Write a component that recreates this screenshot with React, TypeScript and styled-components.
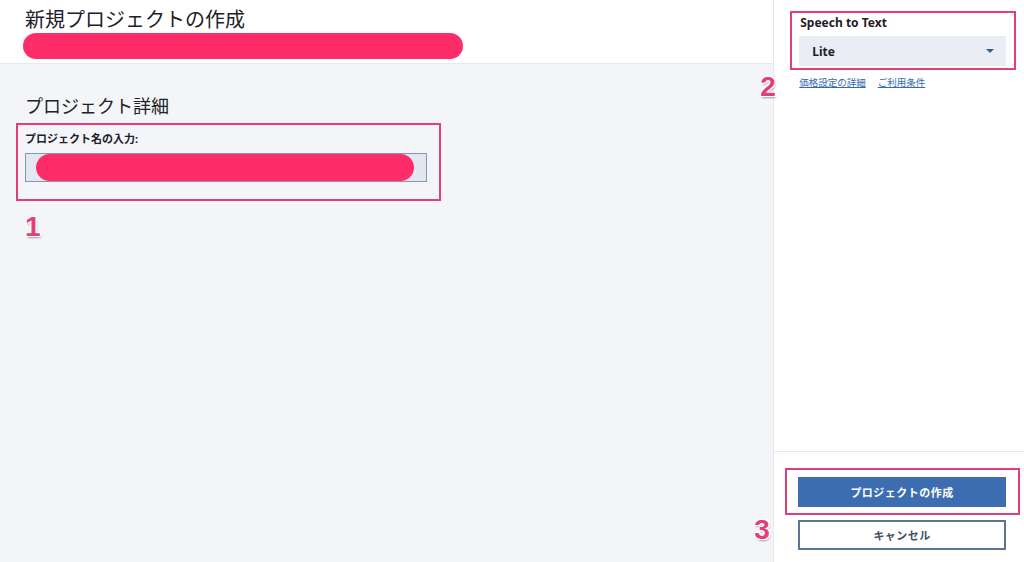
import React from 'react'
import styled, { createGlobalStyle } from 'styled-components'

const Global = createGlobalStyle`
    html, body {
        margin: 0;
        padding: 0;
        background: #ffffff;
    }
    body {
        font-family: "Noto Sans", "Noto Sans CJK JP", sans-serif;
        color: #1f2126;
    }
`

const Page = styled.div`
    display: flex;
    width: 1024px;
    height: 562px;
    overflow: hidden;
`
const Main = styled.div`
    width: 774px;
    display: flex;
    flex-direction: column;
    background: #f4f5f9;
`
const Header = styled.header`
    height: 64px;
    flex-shrink: 0;
    background: #ffffff;
    border-bottom: 1px solid #e8e9ee;
    padding: 7px 0 0 23px;
    box-sizing: border-box;
`
const Title = styled.h1`
    margin: 0 0 0 2px;
    font-size: 20px;
    line-height: 26px;
    font-weight: 400;
    color: #202227;
`
const Redacted = styled.div<{ $w: number; $h: number }>`
    width: ${({ $w }) => $w}px;
    height: ${({ $h }) => $h}px;
    border-radius: ${({ $h }) => $h / 2}px;
    background: #fe2c68;
`
const Content = styled.section`
    position: relative;
    padding: 30px 0 0 16px;
`
const SectionTitle = styled.h2`
    margin: 0 0 5px 9px;
    font-size: 18px;
    line-height: 24px;
    font-weight: 400;
    color: #202227;
`
const Highlight = styled.div`
    border: 2px solid #e23f78;
    box-sizing: border-box;
`
const NameBox = styled(Highlight)`
    width: 425px;
    padding: 6px 0 17px 7px;
`
const FieldLabel = styled.label`
    display: block;
    font-size: 11px;
    line-height: 16px;
    font-weight: 700;
    margin-bottom: 6px;
`
const TextInput = styled.div`
    width: 402px;
    height: 29px;
    box-sizing: border-box;
    background: #e2e7f0;
    border: 1px solid #8598b0;
    padding: 0 12px 0 10px;
    display: flex;
    align-items: center;
`
const Step = styled.span`
    position: absolute;
    font-family: "Liberation Sans", "Noto Sans", sans-serif;
    font-size: 28px;
    font-weight: 700;
    line-height: 1;
    color: #e0407a;
    text-shadow: 0 0 1px #fff, 1px 1px 0 #fff, -1px -1px 0 #fff, 1px -1px 0 #fff, -1px 1px 0 #fff, 1px 2px 2px rgba(0, 0, 0, 0.35);
`

const Sidebar = styled.aside`
    width: 250px;
    border-left: 1px solid #e6e7ec;
    background: #ffffff;
    display: flex;
    flex-direction: column;
    justify-content: space-between;
    position: relative;
`
const SideTop = styled.div`
    padding: 11px 8px 0 16px;
`
const PlanBox = styled(Highlight)`
    padding: 0 8px 2px 7px;
`
const PlanLabel = styled.div`
    font-size: 12px;
    line-height: 18px;
    font-weight: 700;
    margin: 1px 0 4px 1px;
`
const Select = styled.div`
    height: 30px;
    background: #eaedf3;
    display: flex;
    align-items: center;
    justify-content: space-between;
    padding: 0 12px 0 13px;
    font-size: 12px;
    font-weight: 700;
`
const Caret = styled.span`
    width: 0;
    height: 0;
    border-left: 4px solid transparent;
    border-right: 4px solid transparent;
    border-top: 4px solid #3d5a80;
`
const Links = styled.div`
    display: flex;
    gap: 12px;
    padding: 6px 0 0 9px;
`
const Link = styled.a`
    font-size: 9.5px;
    line-height: 14px;
    color: #3569b0;
    text-decoration: underline;
`
const Footer = styled.div`
    border-top: 1px solid #e8e9ee;
    padding: 16px 18px 12px 24px;
    display: flex;
    flex-direction: column;
    gap: 5px;
`
const ActionBox = styled(Highlight)`
    margin: 0 -14px 0 -13px;
    padding: 7px 12px 6px 11px;
`
const Button = styled.button<{ $primary?: boolean }>`
    width: 100%;
    height: 30px;
    box-sizing: border-box;
    font-family: "Noto Sans", "Noto Sans CJK JP", sans-serif;
    font-size: 11px;
    font-weight: 700;
    letter-spacing: 0.5px;
    cursor: pointer;
    background: ${({ $primary }) => ($primary ? '#3d6db1' : '#ffffff')};
    color: ${({ $primary }) => ($primary ? '#ffffff' : '#3c5066')};
    border: ${({ $primary }) => ($primary ? 'none' : '2px solid #5b7690')};
`

const App = () => {
    return (
        <Page>
            <Global />
            <Main>
                <Header>
                    <Title>新規プロジェクトの作成</Title>
                    <Redacted $w={440} $h={26} />
                </Header>
                <Content>
                    <SectionTitle>プロジェクト詳細</SectionTitle>
                    <NameBox>
                        <FieldLabel>プロジェクト名の入力:</FieldLabel>
                        <TextInput>
                            <Redacted $w={378} $h={27} />
                        </TextInput>
                    </NameBox>
                    <Step style={{ left: 25, top: 149 }}>1</Step>
                </Content>
            </Main>
            <Sidebar>
                <Step style={{ left: -14, top: 73 }}>2</Step>
                <Step style={{ left: -20, top: 516 }}>3</Step>
                <SideTop>
                    <PlanBox>
                        <PlanLabel>Speech to Text</PlanLabel>
                        <Select>
                            <span>Lite</span>
                            <Caret />
                        </Select>
                    </PlanBox>
                    <Links>
                        <Link>価格設定の詳細</Link>
                        <Link>ご利用条件</Link>
                    </Links>
                </SideTop>
                <Footer>
                    <ActionBox>
                        <Button $primary>プロジェクトの作成</Button>
                    </ActionBox>
                    <Button>キャンセル</Button>
                </Footer>
            </Sidebar>
        </Page>
    )
}

export default App
